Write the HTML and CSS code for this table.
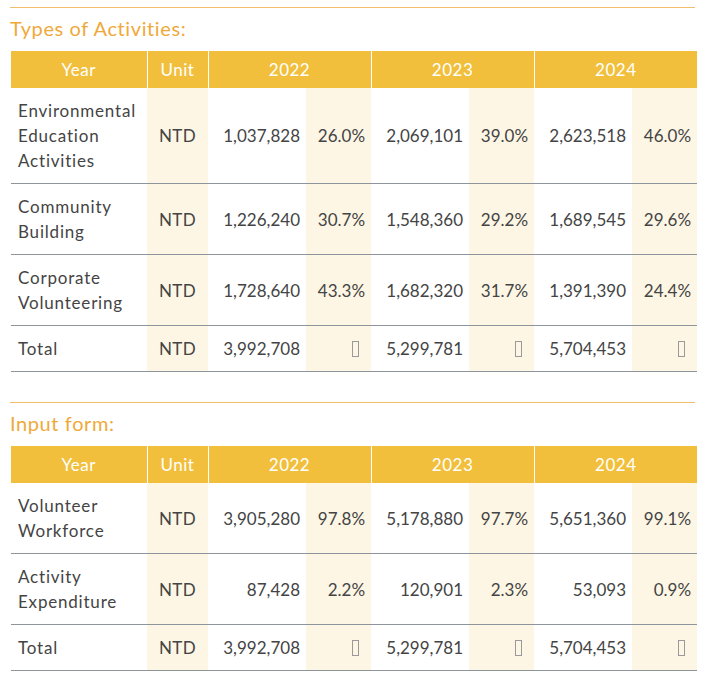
FILE: index.html
```html
<!DOCTYPE html>
<html lang="en">
<head>
<meta charset="utf-8">
<link rel="stylesheet" href="styles.css">
</head>
<body>
<section class="block">
  <h2 class="title">Types of Activities:</h2>
  <table class="data">
    <colgroup>
      <col class="c-label"><col class="c-unit shade">
      <col class="c-val"><col class="c-pct shade">
      <col class="c-val"><col class="c-pct shade">
      <col class="c-val"><col class="c-pct shade">
    </colgroup>
    <thead>
      <tr><th>Year</th><th>Unit</th><th colspan="2">2022</th><th colspan="2">2023</th><th colspan="2">2024</th></tr>
    </thead>
    <tbody>
      <tr><td class="lbl">Environmental<br>Education<br>Activities</td><td class="unit">NTD</td><td class="num">1,037,828</td><td class="num">26.0%</td><td class="num">2,069,101</td><td class="num">39.0%</td><td class="num">2,623,518</td><td class="num">46.0%</td></tr>
      <tr><td class="lbl">Community<br>Building</td><td class="unit">NTD</td><td class="num">1,226,240</td><td class="num">30.7%</td><td class="num">1,548,360</td><td class="num">29.2%</td><td class="num">1,689,545</td><td class="num">29.6%</td></tr>
      <tr><td class="lbl">Corporate<br>Volunteering</td><td class="unit">NTD</td><td class="num">1,728,640</td><td class="num">43.3%</td><td class="num">1,682,320</td><td class="num">31.7%</td><td class="num">1,391,390</td><td class="num">24.4%</td></tr>
      <tr><td class="lbl">Total</td><td class="unit">NTD</td><td class="num">3,992,708</td><td class="num"><span class="tofu"></span></td><td class="num">5,299,781</td><td class="num"><span class="tofu"></span></td><td class="num">5,704,453</td><td class="num"><span class="tofu"></span></td></tr>
    </tbody>
  </table>
</section>
<section class="block second">
  <h2 class="title">Input form:</h2>
  <table class="data">
    <colgroup>
      <col class="c-label"><col class="c-unit shade">
      <col class="c-val"><col class="c-pct shade">
      <col class="c-val"><col class="c-pct shade">
      <col class="c-val"><col class="c-pct shade">
    </colgroup>
    <thead>
      <tr><th>Year</th><th>Unit</th><th colspan="2">2022</th><th colspan="2">2023</th><th colspan="2">2024</th></tr>
    </thead>
    <tbody>
      <tr><td class="lbl">Volunteer<br>Workforce</td><td class="unit">NTD</td><td class="num">3,905,280</td><td class="num">97.8%</td><td class="num">5,178,880</td><td class="num">97.7%</td><td class="num">5,651,360</td><td class="num">99.1%</td></tr>
      <tr><td class="lbl">Activity<br>Expenditure</td><td class="unit">NTD</td><td class="num">87,428</td><td class="num">2.2%</td><td class="num">120,901</td><td class="num">2.3%</td><td class="num">53,093</td><td class="num">0.9%</td></tr>
      <tr><td class="lbl">Total</td><td class="unit">NTD</td><td class="num">3,992,708</td><td class="num"><span class="tofu"></span></td><td class="num">5,299,781</td><td class="num"><span class="tofu"></span></td><td class="num">5,704,453</td><td class="num"><span class="tofu"></span></td></tr>
    </tbody>
  </table>
</section>
</body>
</html>
```
FILE: styles.css
```css
html, body {
  margin: 0;
  padding: 0;
  background: #ffffff;
}
body {
  padding: 7px 10px 0 10px;
  font-family: "Lato", "Open Sans", sans-serif;
  color: #444444;
}
.block {
  border-top: 1px solid #f2bd6e;
  width: 685px;
}
.second {
  margin-top: 30px;
}
.title {
  margin: 6px 0 9px 0;
  font-size: 20px;
  line-height: 28px;
  font-weight: 400;
  letter-spacing: 0.6px;
  color: #efa93b;
}
.data {
  border-collapse: collapse;
  table-layout: fixed;
  width: 684px;
  margin-left: 1px;
  font-size: 17px;
  line-height: 25px;
}
.c-label { width: 136px; }
.c-unit { width: 61px; }
.c-val { width: 98px; }
.c-pct { width: 65px; }
.shade { background: #fdf6e4; }
.data th {
  background: #f1bf3b;
  color: #ffffff;
  font-weight: 400;
  padding: 6px 0;
  text-align: center;
  letter-spacing: 0.5px;
  border-left: 1px solid #ffffff;
}
.data th:first-child { border-left: none; }
.data td {
  padding: 10px 7px;
  border-bottom: 1px solid #8d949b;
  vertical-align: middle;
  white-space: nowrap;
}
.data td.lbl { text-align: left; letter-spacing: 0.8px; }
.data td.unit { text-align: center; padding: 10px 0; letter-spacing: 0.3px; }
.data td.num { text-align: right; padding: 10px 6px 10px 0; }
.tofu {
  display: inline-block;
  width: 5px;
  height: 14px;
  border: 1px solid #9a9a9a;
  vertical-align: -2px;
  margin-right: 6px;
}
```
